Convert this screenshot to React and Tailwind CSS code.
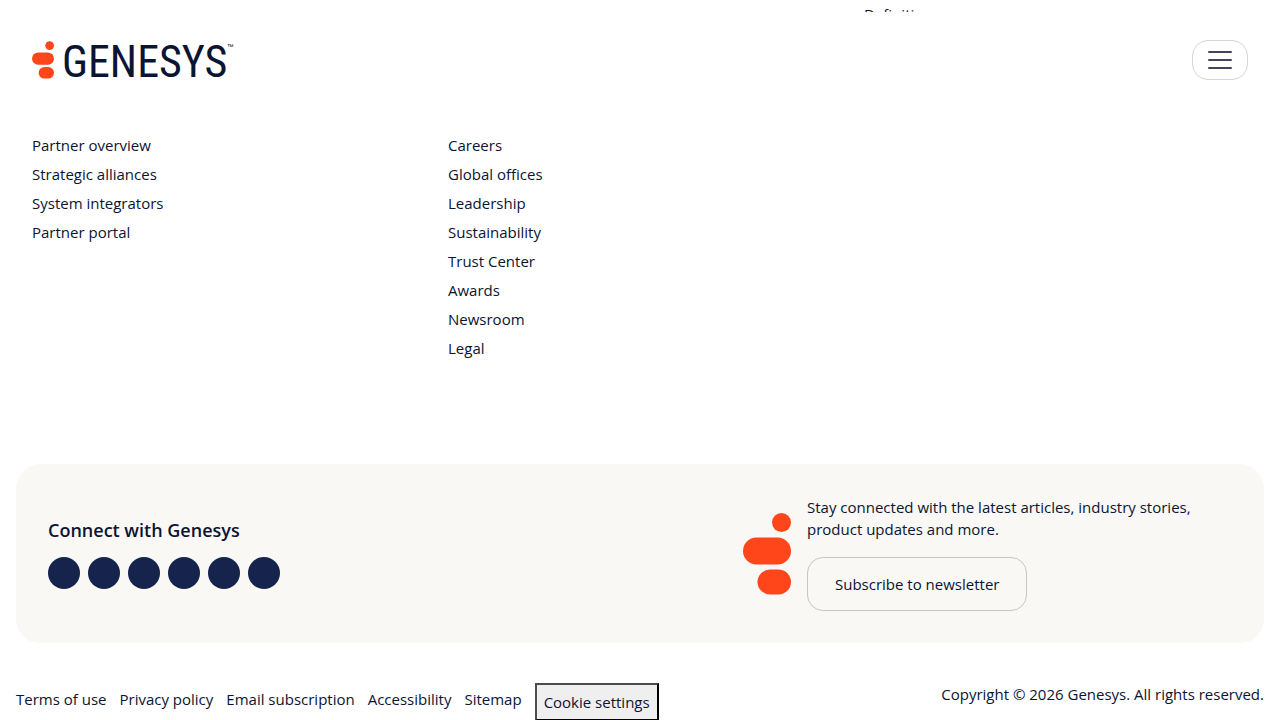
const columns = [
  {
    id: 'partners',
    links: ['Partner overview', 'Strategic alliances', 'System integrators', 'Partner portal'],
  },
  {
    id: 'company',
    links: [
      'Careers',
      'Global offices',
      'Leadership',
      'Sustainability',
      'Trust Center',
      'Awards',
      'Newsroom',
      'Legal',
    ],
  },
]

const socials = ['LinkedIn', 'X', 'Facebook', 'YouTube', 'Instagram', 'Blog']

const legalLinks = ['Terms of use', 'Privacy policy', 'Email subscription', 'Accessibility', 'Sitemap']

function Mark({ className }) {
  return (
    <svg className={className} viewBox="0 0 48 82" fill="#ff451a" aria-hidden="true">
      <circle cx="38.5" cy="9.5" r="9.5" />
      <rect x="0" y="24.5" width="48" height="27" rx="13.5" />
      <rect x="14.5" y="56.5" width="33.5" height="25" rx="12.5" />
    </svg>
  )
}

export default function App() {
  return (
    <div className="min-h-screen overflow-hidden bg-white font-['Open_Sans','Noto_Sans',sans-serif] text-[15px] leading-[22px] text-[#0b1433]">
      {/* End of the resources column, scrolled under the header */}
      <div className="grid h-3 grid-cols-3 overflow-hidden px-4 pt-[3px]">
        <a href="#definitions" className="col-start-3 pl-4">Definitions</a>
      </div>

      <header className="flex h-24 items-center justify-between bg-white px-8">
        <a href="#home" className="flex items-center gap-2" aria-label="Genesys">
          <Mark className="h-[38px] w-[22px]" />
          <span className="flex items-start pt-1">
            <span className="font-['Roboto_Condensed','Roboto',sans-serif] text-[44px] leading-[38px]">
              GENESYS
            </span>
            <span className="text-[8px] leading-[8px]">™</span>
          </span>
        </a>
        <button
          type="button"
          aria-label="Menu"
          className="flex h-10 w-14 items-center justify-center rounded-2xl border border-[#d5d5da]"
        >
          <svg className="h-5 w-6" viewBox="0 0 24 20" fill="none" stroke="#45435a" strokeWidth="2" strokeLinecap="round">
            <path d="M1 2h22M1 10h22M1 18h22" />
          </svg>
        </button>
      </header>

      <footer className="px-4">
        <nav className="grid min-h-[356px] grid-cols-3 pt-[26px]">
          {columns.map((col) => (
            <ul key={col.id} className="flex flex-col gap-[7px] pl-4">
              {col.links.map((link) => (
                <li key={link}>
                  <a href="#link" className="hover:underline">{link}</a>
                </li>
              ))}
            </ul>
          ))}
        </nav>

        {/* Social + newsletter */}
        <section className="flex items-center justify-between rounded-3xl bg-[#f9f8f5] px-8 py-8">
          <div>
            <h2 className="mb-[15px] text-[18px] leading-6 font-semibold">Connect with Genesys</h2>
            <div className="flex gap-2">
              {socials.map((name) => (
                <a key={name} href="#social" aria-label={name} className="size-8 rounded-full bg-[#16244d]" />
              ))}
            </div>
          </div>
          <div className="flex w-[489px] items-center gap-4">
            <Mark className="h-[82px] w-12 shrink-0" />
            <div>
              <p className="mb-[17px]">
                Stay connected with the latest articles, industry stories, product updates and more.
              </p>
              <button type="button" className="h-[54px] rounded-2xl border border-[#c6c6c6] px-[27px]">
                Subscribe to newsletter
              </button>
            </div>
          </div>
        </section>

        <div className="flex items-start justify-between pt-10">
          <div className="flex items-start gap-[13px]">
            {legalLinks.map((link) => (
              <a key={link} href="#legal" className="py-[5px] hover:underline">{link}</a>
            ))}
            <button type="button" className="border-2 border-t-[#4c4c4c] border-r-black border-b-black border-l-[#4c4c4c] bg-[#efefef] px-[7px] py-[6px]">
              Cookie settings
            </button>
          </div>
          <p>Copyright © 2026 Genesys. All rights reserved.</p>
        </div>
      </footer>
    </div>
  )
}
